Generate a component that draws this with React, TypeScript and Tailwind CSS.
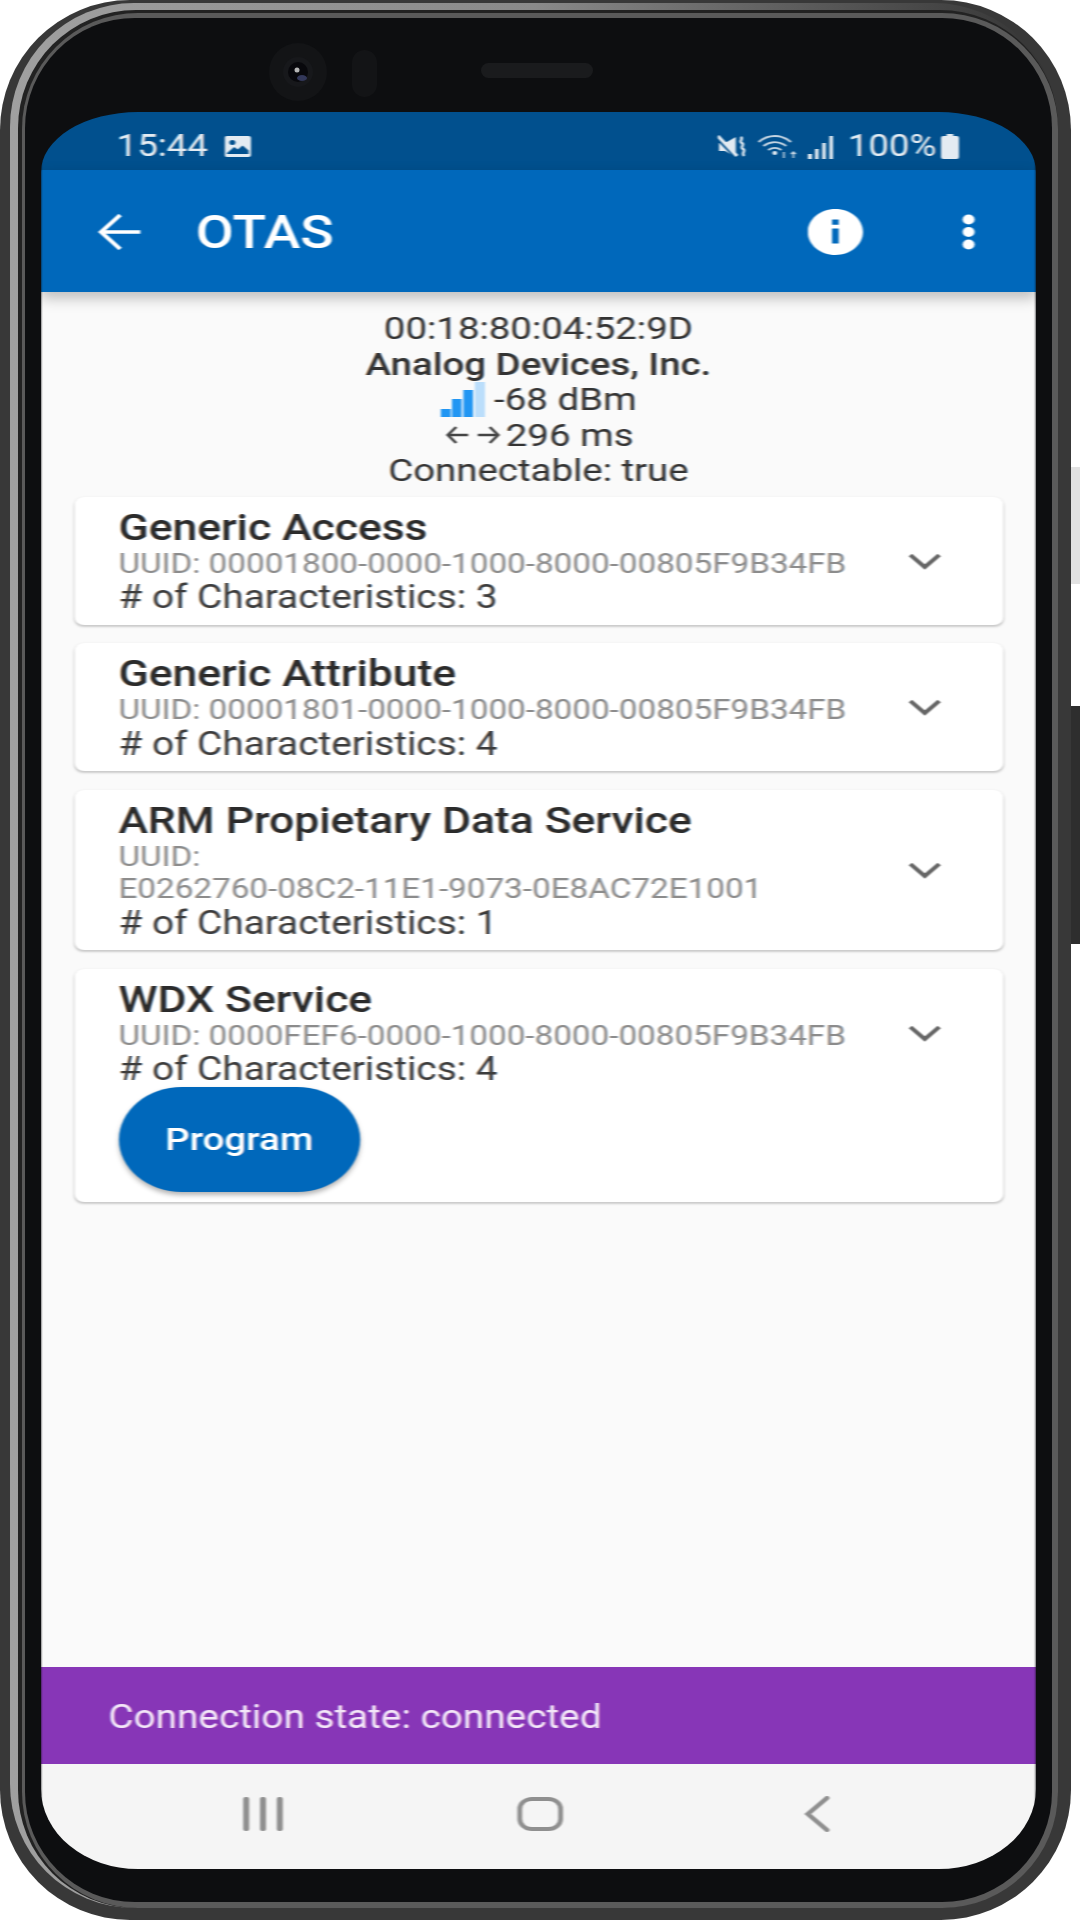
import React from 'react'

const services = [
  { name: 'Generic Access', uuid: ['UUID: 00001800-0000-1000-8000-00805F9B34FB'], count: 3 },
  { name: 'Generic Attribute', uuid: ['UUID: 00001801-0000-1000-8000-00805F9B34FB'], count: 4 },
  { name: 'ARM Propietary Data Service', uuid: ['UUID:', 'E0262760-08C2-11E1-9073-0E8AC72E1001'], count: 1 },
  { name: 'WDX Service', uuid: ['UUID: 0000FEF6-0000-1000-8000-00805F9B34FB'], count: 4, program: true },
]

function StatusBar() {
  return (
    <div className="flex h-[58px] shrink-0 items-center justify-between bg-[#01508e] pl-[63px] pr-[64px] pt-[11px] text-[30.5px] text-[#e3ebf2]">
      <div className="flex items-center gap-[14px]">
        <span className="leading-none">15:44</span>
        <svg width="22" height="21" viewBox="0 0 22 21">
          <rect width="22" height="21" rx="2" fill="#e3ebf2" />
          <circle cx="6.5" cy="6.5" r="2.5" fill="#01508e" />
          <path d="M2 17l6-6 3 2.5 4-4 5 5V18H2z" fill="#01508e" />
        </svg>
      </div>
      <div className="flex items-center">
        <svg width="24" height="24" viewBox="0 0 24 24" fill="none">
          <path d="M1 8h5l9-6v20l-9-6H1z" fill="#e3ebf2" />
          <path d="M0 4l15 18" stroke="#01508e" strokeWidth="3" />
          <path d="M0 1l16 20" stroke="#e3ebf2" strokeWidth="3" />
          <path d="M19 2c3 2-2 4 1 6s-2 4 1 6-2 4 1 7" stroke="#e3ebf2" strokeWidth="2.2" />
        </svg>
        <svg className="ml-[9px]" width="35" height="24" viewBox="0 0 35 24" fill="none" stroke="#c4d4e2">
          <path d="M1 7c8-8 19-8 27 0" strokeWidth="1.8" />
          <path d="M5 11c6-5 13-5 19 0" strokeWidth="1.8" />
          <path d="M9 15c4-3 7-3 11 0" strokeWidth="1.8" />
          <circle cx="14.5" cy="18" r="2" fill="#e3ebf2" stroke="none" />
          <path d="M22 17v6M30 23v-6M28 19l2-2 2 2" strokeWidth="1.4" />
        </svg>
        <svg className="ml-[7px]" width="22" height="24" viewBox="0 0 22 24" fill="#e3ebf2">
          <rect x="0" y="19" width="3.5" height="5" />
          <rect x="6" y="14" width="3" height="10" />
          <rect x="12" y="8" width="3" height="16" />
          <rect x="18" y="1" width="3" height="23" />
        </svg>
        <span className="ml-[11px] leading-none">100%</span>
        <svg className="ml-[4px]" width="15" height="25" viewBox="0 0 16 25" fill="#e3ebf2" preserveAspectRatio="none">
          <path d="M5 0h6v2h3a2 2 0 0 1 2 2v19a2 2 0 0 1-2 2H2a2 2 0 0 1-2-2V4a2 2 0 0 1 2-2h3z" />
        </svg>
      </div>
    </div>
  )
}

function AppBar() {
  return (
    <div className="relative z-10 flex h-[122px] shrink-0 items-center bg-[#0068bb] pt-[2px] shadow-[0_6px_12px_rgba(0,0,0,0.25)]">
      <svg className="ml-[47px]" width="36" height="38" viewBox="0 0 36 38" fill="none" stroke="#fff" strokeWidth="3.6">
        <path d="M36 19H3M19 2L3 19l16 17" />
      </svg>
      <h1 className="ml-[46px] text-[46px] font-medium leading-none text-white">OTAS</h1>
      <svg className="ml-auto" width="46" height="46" viewBox="2 2 20 20" fill="#fff">
        <path d="M12 2C6.48 2 2 6.48 2 12s4.48 10 10 10 10-4.48 10-10S17.52 2 12 2zm1.2 15h-2.4v-6.5h2.4V17zm0-8.2h-2.4V6.6h2.4v2.2z" />
      </svg>
      <svg className="ml-[82px] mr-[50px]" width="12" height="36" viewBox="0 0 12 36" fill="#fff">
        <circle cx="6" cy="5.5" r="5" />
        <circle cx="6" cy="18" r="5" />
        <circle cx="6" cy="30.5" r="5" />
      </svg>
    </div>
  )
}

function DeviceInfo() {
  return (
    <div className="flex flex-col items-center pt-[19px] text-[32px] leading-[35.5px] text-[#333]">
      <div>00:18:80:04:52:9D</div>
      <div className="font-medium">Analog Devices, Inc.</div>
      <div className="flex items-center gap-[8px]">
        <svg width="37" height="35" viewBox="0 0 37 35">
          <rect x="0" y="27" width="8.5" height="8" fill="#2196f3" />
          <rect x="9.5" y="17" width="8" height="18" fill="#2196f3" />
          <rect x="19" y="8" width="8" height="27" fill="#2196f3" />
          <rect x="28.5" y="0" width="8.5" height="35" fill="#bbdefb" />
        </svg>
        <span>-68 dBm</span>
      </div>
      <div className="flex items-center gap-[4px] pl-[2px]">
        <svg width="46" height="22" viewBox="0 0 46 22" fill="none" stroke="#444" strokeWidth="2.4">
          <path d="M19 11H2M9 3l-7 8 7 8M27 11h17M37 3l7 8-7 8" />
        </svg>
        <span>296 ms</span>
      </div>
      <div>Connectable: true</div>
    </div>
  )
}

function ServiceCard({ name, uuid, count, program }: { name: string; uuid: string[]; count: number; program?: boolean }) {
  return (
    <div className="rounded-[8px] bg-white shadow-[0_2px_2px_rgba(0,0,0,0.18),0_0_2px_rgba(0,0,0,0.06)]">
      <div className="flex items-center pb-[10px] pl-[37px] pr-[52px] pt-[11px]">
        <div className="flex-1">
          <div className="text-[37px] font-medium leading-[40px] text-[#2b2b2b]">{name}</div>
          {uuid.map(line => (
            <div key={line} className="whitespace-nowrap text-[27.7px] leading-[32.5px] text-[#8c8c8c]">{line}</div>
          ))}
          <div className="text-[32.3px] leading-[34.5px] text-[#3c3c3c]">
            # of Characteristics: {count}
          </div>
        </div>
        <svg width="27" height="17" viewBox="0 0 27 17" fill="none" stroke="#666" strokeWidth="3.8">
          <path d="M1.5 2l12 12 12-12" />
        </svg>
      </div>
      {program && (
        <button className="-mt-[10px] mb-[10px] ml-[37px] block h-[105px] w-[201px] rounded-full bg-[#0068bb] text-[32px] font-medium text-white shadow-[0_3px_5px_rgba(0,0,0,0.3)]">
          Program
        </button>
      )}
    </div>
  )
}

function NavBar() {
  return (
    <div className="flex h-[105px] shrink-0 items-center justify-center gap-[191px] bg-[#f5f5f5] pb-[6px] pl-[2px]">
      <svg width="40" height="34" viewBox="0 0 40 34" fill="#8f8f8f">
        <rect x="3.5" width="5" height="34" rx="2" />
        <rect x="17.5" width="5" height="34" rx="2" />
        <rect x="31.5" width="5" height="34" rx="2" />
      </svg>
      <svg width="40" height="34" viewBox="0 0 40 34" fill="none" stroke="#8f8f8f" strokeWidth="4">
        <rect x="3" y="2" width="34" height="30" rx="10" />
      </svg>
      <svg width="40" height="36" viewBox="0 0 40 36" fill="none" stroke="#8f8f8f" strokeWidth="4" strokeLinecap="round">
        <path d="M28 2L12 18l16 16" />
      </svg>
    </div>
  )
}

function BezelTop() {
  return (
    <div className="flex h-[94px] shrink-0 items-start pl-[228px] pt-[25px]">
      <svg width="58" height="58" viewBox="0 0 58 58">
        <circle cx="29" cy="29" r="29" fill="#131416" />
        <circle cx="29" cy="29" r="15" fill="#17181b" />
        <circle cx="29" cy="29" r="10" fill="#08080c" />
        <ellipse cx="33" cy="35" rx="5" ry="3" fill="#33385a" />
        <circle cx="28" cy="27" r="2.5" fill="#b5b5b5" />
      </svg>
      <div className="ml-[25px] mt-[7px] h-[47px] w-[25px] rounded-full bg-[#131416]" />
      <div className="ml-[104px] mt-[20px] h-[15px] w-[112px] rounded-full bg-[#1a1b1d]" />
    </div>
  )
}

export default function App() {
  return (
    <div className="flex h-[1920px] w-[1080px] overflow-hidden bg-white font-['Roboto',sans-serif]">
      {/* Phone frame, nested rings */}
      <div className="h-[1920px] w-[1071px] shrink-0 rounded-[130px] bg-[#383838] pb-[12px] pl-[10px] pr-[13px] pt-[3px]">
        <div className="h-full rounded-[124px] bg-linear-to-r from-[#a0a0a0] via-[#8a8a8a] to-[#333] pl-[8px] pt-[7px]">
          <div className="h-full rounded-[118px] bg-[#222] pl-[4px] pt-[3px]">
            <div className="h-full rounded-[116px] bg-[#5a5a5a] pb-[6px] pl-[3px] pr-[6px] pt-[5px]">
              <div className="flex h-full flex-col rounded-[110px] bg-[#0d0e10] pb-[33px] pl-[16px] pr-[16px]">
                <BezelTop />
                {/* Screen */}
                <div className="h-[1757px] w-[995px] overflow-hidden rounded-[97px_97px_97px_97px/60px_60px_80px_80px]">
                  <div className="flex h-full w-[829px] origin-top-left scale-x-120 flex-col blur-[0.7px]">
                    <StatusBar />
                    <AppBar />
                    <main className="min-h-0 flex-1 bg-[#fafafa]">
                      <DeviceInfo />
                      <div className="mt-[8px] flex flex-col gap-[18.5px] px-[27.5px]">
                        {services.map(s => (
                          <ServiceCard key={s.name} {...s} />
                        ))}
                      </div>
                    </main>
                    <div className="flex h-[97px] shrink-0 items-center bg-[#8736b7] pl-[56px] pt-[3px] text-[32.3px] text-[#f3e6f8]">
                      Connection state: connected
                    </div>
                    <NavBar />
                  </div>
                </div>
              </div>
            </div>
          </div>
        </div>
      </div>
      {/* Side buttons */}
      <div className="flex-1">
        <div className="mt-[467px] h-[117px] bg-[#e2e2e2]" />
        <div className="mt-[122px] h-[238px] bg-[#2e2e2e]" />
      </div>
    </div>
  )
}
